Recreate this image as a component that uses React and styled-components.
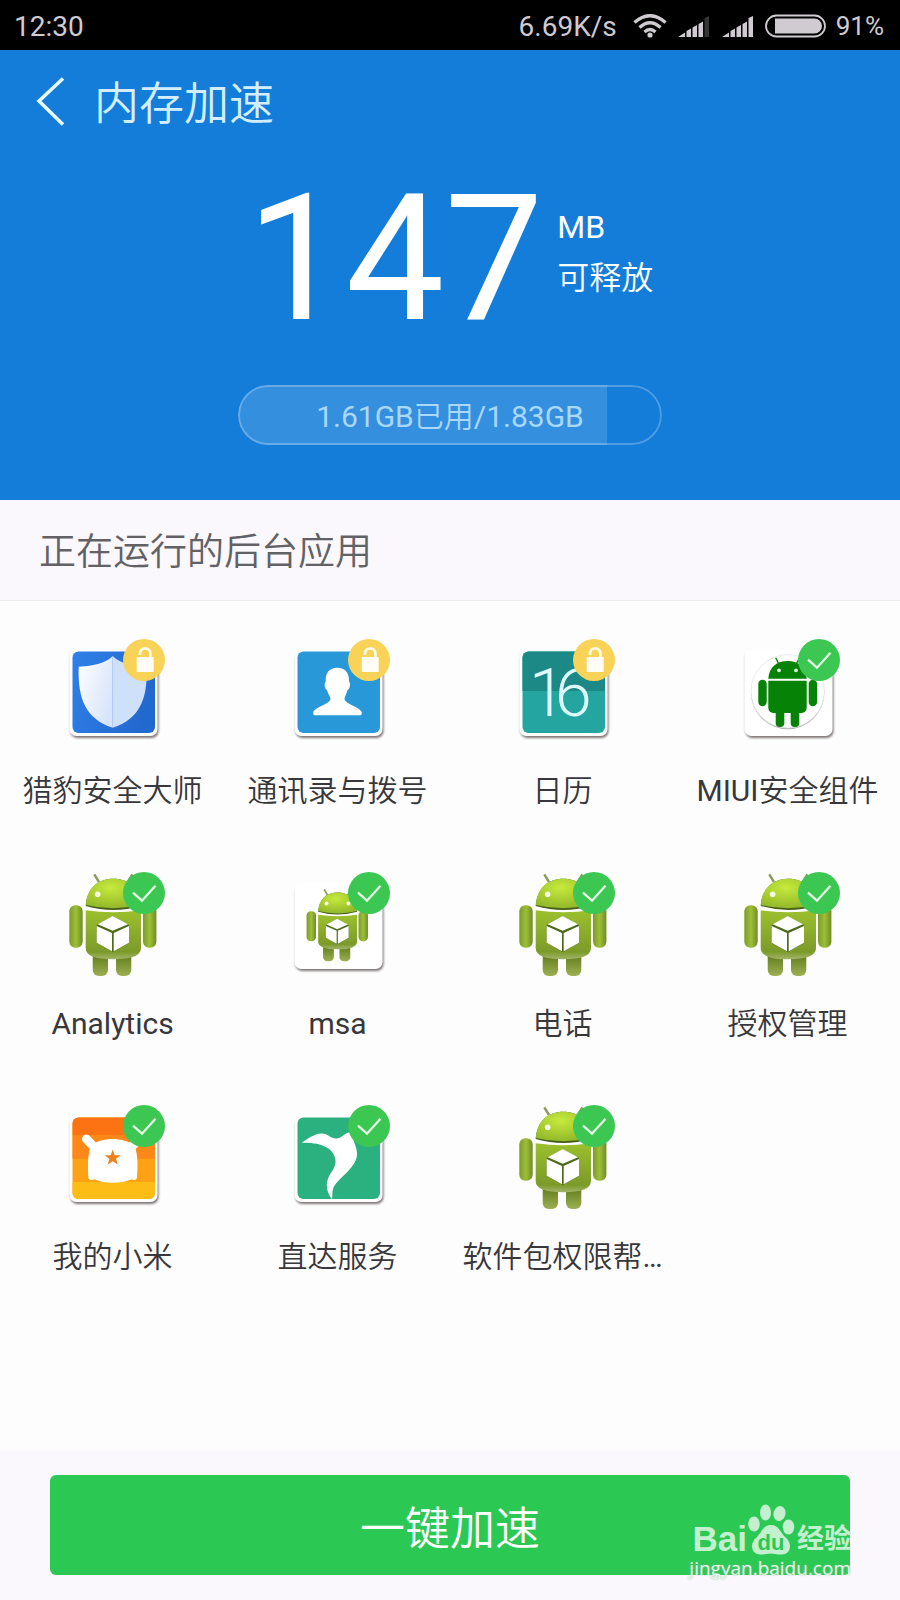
import React, { useState } from 'react';
import styled, { createGlobalStyle } from 'styled-components';

const GlobalStyle = createGlobalStyle`
  * {
    box-sizing: border-box;
  }
  body {
    margin: 0;
    background: #fdfdfd;
    font-family: Roboto, "Noto Sans CJK SC DemiLight", "Noto Sans CJK SC Light", "Noto Sans CJK SC", sans-serif;
  }
  button {
    font-family: inherit;
    border: none;
    padding: 0;
    background: none;
    cursor: pointer;
  }
`;

const Page = styled.div`
  min-height: 100vh;
  display: flex;
  flex-direction: column;
`;

const StatusBar = styled.div`
  height: 50px;
  padding: 2px 16px 0 14px;
  display: flex;
  align-items: center;
  background: #000;
  color: #cfcbd0;
  font-size: 28px;
`;
const StatusIcons = styled.div`
  margin-left: auto;
  display: flex;
  align-items: center;
  gap: 10px;
`;
const Speed = styled.span`
  margin-right: 6px;
`;
const Percent = styled.span`
  font-size: 26px;
`;

const Hero = styled.header`
  padding-bottom: 55px;
  background: #147dda;
  color: #fff;
`;
const TitleBar = styled.div`
  height: 106px;
  padding-left: 32px;
  display: flex;
  align-items: center;
  gap: 24px;
`;
const Back = styled.button`
  height: 56px;
  width: 38px;
`;
const Title = styled.h1`
  margin: 0;
  padding-top: 4px;
  font-size: 45px;
  font-weight: 400;
  line-height: 60px;
  color: #d3efff;
`;
const Readout = styled.div`
  margin-top: 28px;
  display: flex;
  justify-content: center;
  gap: 14px;
`;
const Amount = styled.div`
  font-size: 176px;
  line-height: 150px;
`;
const Unit = styled.div`
  padding-top: 18px;
  font-size: 32px;
  line-height: 51px;
`;
const Meter = styled.div`
  position: relative;
  overflow: hidden;
  width: 424px;
  height: 60px;
  margin: 51px auto 0;
  border-radius: 30px;

  &::after {
    content: '';
    position: absolute;
    inset: 0;
    border: 2px solid rgba(255, 255, 255, 0.25);
    border-radius: 30px;
  }
`;
const MeterFill = styled.div`
  position: absolute;
  top: 0;
  bottom: 0;
  left: 0;
  background: rgba(255, 255, 255, 0.14);
`;
const MeterText = styled.div`
  position: relative;
  font-size: 30px;
  line-height: 64px;
  text-align: center;
  color: #a9d8fb;
`;

const SectionTitle = styled.h2`
  margin: 0;
  height: 101px;
  padding: 0 39px;
  border-bottom: 1px solid #ececee;
  background: #faf8fc;
  color: #626166;
  font-size: 37px;
  font-weight: 400;
  line-height: 106px;
`;

const Apps = styled.main`
  flex: 1;
  padding-top: 34px;
  display: grid;
  grid-template-columns: repeat(4, 1fr);
  grid-auto-rows: 233px;
`;
const AppButton = styled.button`
  min-width: 0;
  display: flex;
  flex-direction: column;
  align-items: center;
  justify-content: flex-start;
  gap: 26px;
`;
const IconBox = styled.span`
  position: relative;
  width: 105px;
  height: 110px;
`;
const BadgeBox = styled.span`
  position: absolute;
  top: 4px;
  right: 0;
  height: 42px;
`;
const Name = styled.span`
  white-space: nowrap;
  font-size: 30px;
  line-height: 40px;
  color: #38373b;
`;

const Footer = styled.footer`
  position: relative;
  padding: 25px 50px;
  background: #faf8fc;
`;
const BoostButton = styled.button`
  width: 100%;
  height: 100px;
  border-radius: 6px;
  background: #2bc954;
  color: #fff;
  font-size: 45px;
`;
const Watermark = styled.a`
  position: absolute;
  right: 49px;
  bottom: 20px;
  color: #c3f0ce;
  text-decoration: none;
`;
const Brand = styled.span`
  display: flex;
  align-items: flex-end;
  justify-content: flex-end;
  height: 52px;
  font-family: "Liberation Sans", "Noto Sans CJK SC", sans-serif;
  font-size: 35px;
  font-weight: 700;
  line-height: 34px;
`;
const BrandSub = styled.span`
  margin-left: 2px;
  font-size: 27px;
`;
const Site = styled.span`
  display: block;
  font-family: "Open Sans", sans-serif;
  font-size: 19px;
  line-height: 24px;
  color: #e6f8ea;
  text-shadow: 0 0 2px #8fb89a;
`;

const Wifi = () => (
  <svg width="34" height="24" viewBox="0 0 34 24" fill="none" stroke="#cfcbd0" strokeWidth="3.4">
    <path d="M1.5 8.5Q17-5 32.500 8.500" />
    <path d="M6.500 13.500Q17 4 27.500 13.500" />
    <path d="M11.500 18Q17 13 22.500 18" />
    <circle cx="17" cy="21" r="2.600" fill="#cfcbd0" stroke="none" />
  </svg>
);

const Signal = ({ weak }) => (
  <svg width="34" height="22" viewBox="0 0 34 22" fill="#cfcbd0">
    <path d="M1 22L8 17.500V22ZM9.500 22V16L14 13.500V22ZM15.500 22V12.500L20 10V22ZM21.500 22V9L26 6.500V22Z" />
    <path d="M27.500 22V3L32 1V22Z" fill={weak ? '#343436' : '#cfcbd0'} />
  </svg>
);

const Battery = () => (
  <svg width="61" height="24" viewBox="0 0 61 24">
    <rect x="1" y="1.500" width="59" height="21" rx="10.500" fill="none" stroke="#cfcbd0" strokeWidth="1.800" />
    <path d="M10 4.500H49.500a7.500 7.500 0 0 1 0 15H10Z" fill="#cfcbd0" />
  </svg>
);

const Tile = ({ fill = '#fff', children }) => (
  <>
    <rect
      x="9.500" y="14" width="88" height="87" rx="7" fill="#fff"
      style={{ filter: 'drop-shadow(1px 2px 1px rgba(50, 35, 35, 0.62))' }}
    />
    <rect x="12.500" y="16.500" width="82.500" height="81.500" rx="6" fill={fill} />
    {children}
  </>
);

const Shield = () => (
  <Tile fill="url(#shieldBack)">
    <path d="M52.700 21C46 28 34 31 18.700 31.700C17.500 64 26 84 52.700 92.700Z" fill="url(#shieldLeft)" />
    <path d="M52.700 21C59.500 28 71 31 86.500 31.700C88 64 79.500 84 52.700 92.700Z" fill="#cfe0fa" />
  </Tile>
);

const Contact = () => (
  <Tile fill="#2898d8">
    <path
      d="M52.300 32.700C60 32.700 64.300 37.500 64 46.500C66 48 65 54 62.500 55C61.500 59 60 61 59.500 63.500
        C59.500 69 74 71.500 76.700 77V79Q76.700 80.300 75 80.300H30Q28.300 80.300 28.300 79V77
        C31 71.500 45.500 69 45.500 63.500C45 61 43 59 42 55C39.500 54 39 48 40.700 46.500C40.300 37.500 44.600 32.700 52.300 32.700Z"
      fill="#fff"
    />
  </Tile>
);

const Calendar = () => (
  <Tile fill="#24a5a0">
    <path d="M12.500 56V22.500a6 6 0 0 1 6-6H89a6 6 0 0 1 6 6V56Z" fill="#1c8987" />
    <text x="19 45" y="81" fontSize="66" fontWeight="300" fill="#dcfbfb">16</text>
  </Tile>
);

const Robot = () => (
  <Tile>
    <circle cx="52.700" cy="57.500" r="36.700" fill="#b5b0b5" />
    <circle cx="52.700" cy="56.300" r="36.700" fill="#fff" stroke="#e6e4e6" strokeWidth="0.800" />
    <g fill="#068206">
      <path d="M33.300 43.700C34 32 42 26 52.500 26S71 32 71.700 43.700Z" />
      <path d="M33.300 45.700H71.700V73a5 5 0 0 1-5 5H38.300a5 5 0 0 1-5-5Z" />
      <rect x="23.300" y="44.700" width="8.400" height="26.500" rx="4.200" />
      <rect x="73.700" y="44.700" width="8.400" height="26.500" rx="4.200" />
      <rect x="40.700" y="72" width="8.600" height="20" rx="4" />
      <rect x="55.700" y="72" width="8.600" height="20" rx="4" />
    </g>
    <path d="M40.700 22.700L43.500 28.500M64.500 22.700L61.500 28.500" stroke="#068206" strokeWidth="1.400" />
    <circle cx="44" cy="35.300" r="1.900" fill="#dff5df" />
    <circle cx="61" cy="35.300" r="1.900" fill="#dff5df" />
  </Tile>
);

const Droid = () => (
  <>
    <path d="M34.300 6.300L39 14M72.400 6.300L67.700 14" stroke="#8a9a5c" strokeWidth="2.400" />
    <rect x="32.700" y="80" width="15.300" height="28" rx="6" fill="url(#droidLeg)" />
    <rect x="56" y="80" width="15.300" height="28" rx="6" fill="url(#droidLeg)" />
    <rect x="9.300" y="37.300" width="13.400" height="42.400" rx="6" fill="url(#droidArm)" />
    <rect x="83" y="37.300" width="13.400" height="42.400" rx="6" fill="url(#droidArm)" />
    <path d="M25.700 38C27 20 38 10.700 53.300 10.700S80 20 81 38Q53.300 46 25.700 38Z" fill="#46601a" />
    <path d="M25.700 37C27 20 38 10.700 53.300 10.700S80 20 81 37Q53.300 43.500 25.700 37Z" fill="url(#droidHead)" />
    <path d="M25.700 42.300Q53.300 46 81 42.300V80Q81 91.300 53.300 91.300T25.700 80Z" fill="url(#droidBody)" />
    <circle cx="37.700" cy="26.300" r="2.800" fill="#f5fae0" />
    <circle cx="68.700" cy="26.300" r="2.800" fill="#f5fae0" />
    <path d="M52.700 48L69 57V75L52.700 84L36.700 75V57Z" fill="#4f6a1c" />
    <path d="M52.700 48L68 56.200L52.700 62.800L37.700 56.200Z" fill="#fff" />
    <path d="M36.700 58L52 65V83.300L36.700 74.700ZM69 58L53.700 65V83.300L69 74.700Z" fill="#fff" />
  </>
);

const SmallDroid = () => (
  <Tile>
    <g transform="translate(15 17) scale(0.705)">
      <Droid />
    </g>
  </Tile>
);

const Bunny = () => (
  <Tile fill="#fda115">
    <path d="M12.500 34V22.500a6 6 0 0 1 6-6H89a6 6 0 0 1 6 6V34Z" fill="#fc7313" />
    <path d="M12.500 34H95V57.700H12.500Z" fill="#fb8817" />
    <path d="M12.500 81H95V92a6 6 0 0 1-6 6H18.500a6 6 0 0 1-6-6Z" fill="#fdbc16" />
    <path d="M26.500 38L34 46M79 38L71.500 46" stroke="#fff" strokeWidth="9" strokeLinecap="round" />
    <path
      d="M31 45C40 35.500 65 35.500 74.500 45C78.500 54 77.500 67 77 77Q75.500 80 71.500 78.200C62 83 44 83 34.500 78.200
        Q29.500 80 28.300 77C28 67 27 54 31 45Z"
      fill="#fff"
    />
    <path d="M52.700 48.500L54.700 54.200H60.700L56 57.800L57.700 63.600L52.700 60.200L47.700 63.600L49.400 57.800L44.700 54.200H50.700Z" fill="#f07f1c" />
  </Tile>
);

const Bird = () => (
  <Tile fill="#2bb07f">
    <path
      d="M16.700 41.700C24 37 29 33 36 32.500C43 32 45 38 52 37.500C57 37 59 32 66 31C67 38 72.500 46 72 54
        C71 68 51 78 48 88C47 92 47.500 95 47 98.300C42 92 40.500 84 43 78C45 71 51 68 50.500 59C49 47 36 41 16.700 41.700Z"
      fill="#fff"
    />
  </Tile>
);

const Badge = ({ kind }) => (
  <svg width="42" height="42" viewBox="0 0 42 42">
    <circle cx="21" cy="21" r="21" fill={kind === 'lock' ? '#f8d358' : '#3cc752'} />
    {kind === 'lock' && (
      <>
        <path d="M17 16V14.500a5.200 5.200 0 0 1 10.400 0V18" fill="none" stroke="#fffbe8" strokeWidth="2.800" />
        <rect x="13.700" y="18" width="17" height="15" rx="1" fill="#fffdf6" />
      </>
    )}
    {kind === 'check' && (
      <path d="M10 20.700L19 28.700L32.500 13.700" fill="none" stroke="#e4fbe4" strokeWidth="2.300" />
    )}
  </svg>
);

// shared gradients, referenced by id from the app icons
const Gradients = () => (
  <svg width="0" height="0" style={{ position: 'absolute' }} aria-hidden="true">
    <defs>
      <linearGradient id="shieldBack" x1="0" x2="1" y1="0" y2="0.300">
        <stop offset="0" stopColor="#2f80e8" />
        <stop offset="1" stopColor="#2269cf" />
      </linearGradient>
      <linearGradient id="shieldLeft" x1="0" x2="1" y1="0" y2="0.600">
        <stop offset="0" stopColor="#fff" />
        <stop offset="1" stopColor="#d8e4fa" />
      </linearGradient>
      <radialGradient id="droidHead" cx="0.450" cy="0.300" r="0.700">
        <stop offset="0" stopColor="#c6ea3c" />
        <stop offset="1" stopColor="#93b82a" />
      </radialGradient>
      <linearGradient id="droidBody" x1="0" x2="0" y1="0" y2="1">
        <stop offset="0" stopColor="#9cc02d" />
        <stop offset="0.850" stopColor="#7c9a2a" />
        <stop offset="1" stopColor="#a3b56c" />
      </linearGradient>
      <linearGradient id="droidArm">
        <stop offset="0" stopColor="#7d9c2a" />
        <stop offset="0.500" stopColor="#9dbf38" />
        <stop offset="1" stopColor="#6f8c24" />
      </linearGradient>
      <linearGradient id="droidLeg" x1="0" x2="0" y1="0" y2="1">
        <stop offset="0.300" stopColor="#65801f" />
        <stop offset="1" stopColor="#9db053" />
      </linearGradient>
    </defs>
  </svg>
);

const Paw = () => (
  <svg width="48" height="52" viewBox="0 0 48 52" fill="#c3f0ce">
    <ellipse cx="7" cy="20" rx="5.800" ry="7.500" />
    <ellipse cx="18.500" cy="8.500" rx="5.500" ry="8" />
    <ellipse cx="32.500" cy="9.500" rx="6" ry="7.500" transform="rotate(15 32.500 9.500)" />
    <ellipse cx="41.500" cy="23" rx="5.800" ry="7.500" />
    <path d="M24 21C32 21 33 28 38 33C46 39 44 50 35 50.500C30 50.800 28 49.500 24 49.500S18 50.800 13 50.500C4 50 2 39 10 33C15 28 16 21 24 21Z" />
    <text x="24" y="46" textAnchor="middle" fontSize="22" fontWeight="700" fill="#2bc954">du</text>
  </svg>
);

const apps = [
  { name: '猎豹安全大师', icon: Shield, locked: true },
  { name: '通讯录与拨号', icon: Contact, locked: true },
  { name: '日历', icon: Calendar, locked: true },
  { name: 'MIUI安全组件', icon: Robot },
  { name: 'Analytics', icon: Droid },
  { name: 'msa', icon: SmallDroid },
  { name: '电话', icon: Droid },
  { name: '授权管理', icon: Droid },
  { name: '我的小米', icon: Bunny },
  { name: '直达服务', icon: Bird },
  { name: '软件包权限帮…', icon: Droid },
];

const AppItem = ({ app }) => {
  const [on, setOn] = useState(true)
  const Icon = app.icon
  return (
    <AppButton type="button" aria-pressed={on} onClick={() => setOn(!on)}>
      <IconBox>
        <svg width="105" height="110" viewBox="0 0 105 110"><Icon /></svg>
        {on && <BadgeBox><Badge kind={app.locked ? 'lock' : 'check'} /></BadgeBox>}
      </IconBox>
      <Name>{app.name}</Name>
    </AppButton>
  )
}

const App = () => {
  const used = 87
  return (
    <Page>
      <GlobalStyle />
      <Gradients />
      <StatusBar>
        <span>12:30</span>
        <StatusIcons>
          <Speed>6.69K/s</Speed>
          <Wifi />
          <Signal weak />
          <Signal />
          <Battery />
          <Percent>91%</Percent>
        </StatusIcons>
      </StatusBar>
      <Hero>
        <TitleBar>
          <Back type="button" aria-label="返回">
            <svg width="38" height="56" viewBox="0 0 38 56" fill="none" stroke="#e8fbff" strokeWidth="3.500">
              <path d="M31 3.500L7 26L31 49.500" />
            </svg>
          </Back>
          <Title>内存加速</Title>
        </TitleBar>
        <Readout>
          <Amount>147</Amount>
          <Unit>
            <div>MB</div>
            <div>可释放</div>
          </Unit>
        </Readout>
        <Meter role="progressbar" aria-valuenow={used} aria-label="内存">
          <MeterFill style={{ width: `${used}%` }} />
          <MeterText>1.61GB已用/1.83GB</MeterText>
        </Meter>
      </Hero>
      <SectionTitle>正在运行的后台应用</SectionTitle>
      <Apps>
        {apps.map((app) => <AppItem key={app.name} app={app} />)}
      </Apps>
      <Footer>
        <BoostButton type="button">一键加速</BoostButton>
        <Watermark href="#jingyan">
          <Brand>
            Bai
            <Paw />
            <BrandSub>经验</BrandSub>
          </Brand>
          <Site>jingyan.baidu.com</Site>
        </Watermark>
      </Footer>
    </Page>
  )
}

export default App;
